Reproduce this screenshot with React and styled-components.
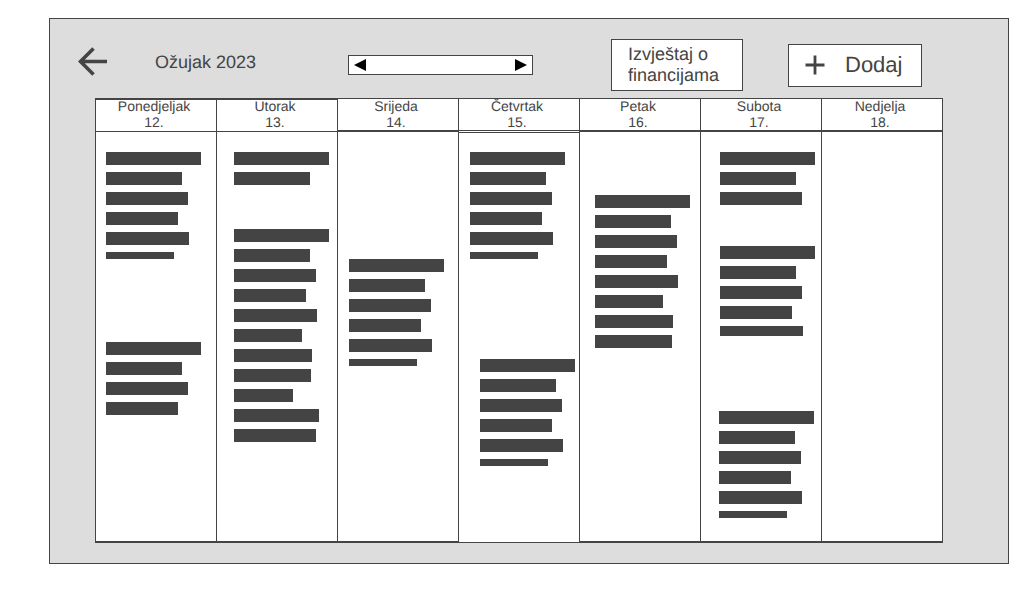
import React from 'react';
import styled, { createGlobalStyle, ThemeProvider } from 'styled-components';

const theme = { ink: '#444444', panel: '#dddddd', paper: '#ffffff' };

const GlobalStyle = createGlobalStyle`
  *, *::before, *::after { box-sizing: border-box; }
  body {
    margin: 0;
    background: #ffffff;
    color: #444444;
    font-family: "Liberation Sans", Arial, sans-serif;
    text-rendering: geometricPrecision;
  }
`;

const Frame = styled.main`
  margin: 18px 15px 0 49px;
  border: 1px solid ${({ theme }) => theme.ink};
  background: ${({ theme }) => theme.panel};
  padding-bottom: 20px;
`;

const Toolbar = styled.header`
  display: flex;
  align-items: center;
  justify-content: space-between;
  min-height: 79px;
  padding: 13px 86px 0 28px;
`;

const Navigation = styled.div`
  display: flex;
  align-items: center;
  padding-bottom: 6px;
`;

const Actions = styled.div`
  display: flex;
  align-items: center;
  gap: 45px;
`;

const BackButton = styled.button`
  display: flex;
  padding: 0;
  border: 0;
  background: none;
  color: inherit;
  margin-right: 47px;
`;

const Month = styled.h1`
  margin: 0;
  width: 193px;
  font-size: 18px;
  line-height: 20px;
  font-weight: 400;
`;

const Pager = styled.nav`
  display: flex;
  align-items: center;
  justify-content: space-between;
  width: 185px;
  height: 20px;
  padding: 0 5px;
  margin-top: 6px;
  border: 1px solid ${({ theme }) => theme.ink};
  background: ${({ theme }) => theme.paper};
`;

const PagerButton = styled.button`
  display: flex;
  padding: 0;
  border: 0;
  background: none;
  color: #000000;
`;

const ActionButton = styled.button`
  display: flex;
  align-items: center;
  border: 1px solid ${({ theme }) => theme.ink};
  background: ${({ theme }) => theme.paper};
  color: inherit;
  font-family: inherit;
  text-align: left;
  text-rendering: inherit;
`;

const ReportButton = styled(ActionButton)`
  width: 132px;
  height: 52px;
  padding: 0 16px;
  font-size: 18px;
  line-height: 21px;
`;

const AddButton = styled(ActionButton)`
  gap: 20px;
  width: 134px;
  height: 43px;
  padding: 0 16px;
  font-size: 22px;
  line-height: 24px;
`;

const Calendar = styled.div`
  padding: 0 65px 0 45px;
`;

const Week = styled.table`
  width: 100%;
  table-layout: fixed;
  border-collapse: separate;
  border-spacing: 0;
  border-left: 1px solid ${({ theme }) => theme.ink};
  background: ${({ theme }) => theme.paper};
`;

const HeadCell = styled.th`
  padding: 0;
  vertical-align: top;
  border-right: 1px solid ${({ theme }) => theme.ink};
  height: 34px;
  font-size: 14px;
  line-height: 16px;
  font-weight: 400;
`;

const HeadLabel = styled.div`
  height: ${({ $split }) => ($split ? 33 : 34)}px;
  padding-right: 4px;
  box-shadow:
    inset 0 ${({ $top }) => $top}px 0 ${({ theme }) => theme.ink},
    inset 0 -${({ $bottom }) => $bottom}px 0 ${({ theme }) => theme.ink};
`;

const DayCell = styled.td`
  height: 411px;
  padding: 0;
  vertical-align: top;
  border-right: 1px solid ${({ theme }) => theme.ink};
  box-shadow:
    inset 0 ${({ $split }) => ($split ? 1 : 0)}px 0 ${({ theme }) => theme.ink},
    inset 0 -${({ $split }) => ($split ? 1 : 2)}px 0 ${({ theme }) => theme.ink};
`;

const Entry = styled.div`
  display: flex;
  flex-direction: column;
  gap: 7px;
  padding-top: ${({ $before }) => $before}px;
  padding-left: ${({ $indent }) => $indent}px;
`;

const Line = styled.div`
  width: ${({ $width }) => $width}px;
  height: ${({ $height }) => $height}px;
  background: ${({ theme }) => theme.ink};
`;

const LINE_WIDTHS = [95, 76, 82, 72, 83, 68, 78, 77, 59, 85, 82];

const DAYS = [
  { name: 'Ponedjeljak', date: '12.', top: 2, bottom: 1, entries: [
    { before: 20, indent: 10, lines: 6, last: 7 },
    { before: 83, indent: 10, lines: 4 },
  ] },
  { name: 'Utorak', date: '13.', top: 2, bottom: 1, entries: [
    { before: 20, indent: 17, lines: 2 },
    { before: 44, indent: 17, lines: 11 },
  ] },
  { name: 'Srijeda', date: '14.', top: 1, bottom: 2, entries: [
    { before: 127, indent: 11, lines: 6, last: 7 },
  ] },
  { name: 'Četvrtak', date: '15.', top: 1, bottom: 1, split: true, entries: [
    { before: 20, indent: 11, lines: 6, last: 7 },
    { before: 100, indent: 21, lines: 6, last: 7 },
  ] },
  { name: 'Petak', date: '16.', top: 1, bottom: 2, entries: [
    { before: 63, indent: 15, lines: 8 },
  ] },
  { name: 'Subota', date: '17.', top: 1, bottom: 2, entries: [
    { before: 20, indent: 19, lines: 3 },
    { before: 41, indent: 19, lines: 5, last: 10 },
    { before: 75, indent: 18, lines: 6, last: 7 },
  ] },
  { name: 'Nedjelja', date: '18.', top: 1, bottom: 2, entries: [] },
];

function EntryLines({ entry }) {
  return (
    <Entry $before={entry.before} $indent={entry.indent}>
      {LINE_WIDTHS.slice(0, entry.lines).map((width, i) => (
        <Line key={i} $width={width} $height={i === entry.lines - 1 && entry.last ? entry.last : 13} />
      ))}
    </Entry>
  );
}

export default function App() {
  return (
    <ThemeProvider theme={theme}>
      <GlobalStyle />
      <Frame>
        <Toolbar>
          <Navigation>
            <BackButton type="button" aria-label="Natrag">
              <svg width="30" height="30" viewBox="0 0 30 30" fill="none" stroke="currentColor" strokeWidth="3.6">
                <path d="M29 14.5H3M15.5 1.5L2.5 14.5L15.5 27.5" />
              </svg>
            </BackButton>
            <Month>Ožujak 2023</Month>
            <Pager aria-label="Tjedan">
              <PagerButton type="button" aria-label="Prethodni">
                <svg width="12" height="12" viewBox="0 0 12 12"><path d="M12 0V12L0 6Z" fill="currentColor" /></svg>
              </PagerButton>
              <PagerButton type="button" aria-label="Sljedeći">
                <svg width="12" height="12" viewBox="0 0 12 12"><path d="M0 0V12L12 6Z" fill="currentColor" /></svg>
              </PagerButton>
            </Pager>
          </Navigation>
          <Actions>
            <ReportButton type="button">Izvještaj o financijama</ReportButton>
            <AddButton type="button">
              <svg width="20" height="20" viewBox="0 0 20 20" fill="none" stroke="currentColor" strokeWidth="2.8">
                <path d="M0.5 10H19.5M10 0.5V19.5" />
              </svg>
              Dodaj
            </AddButton>
          </Actions>
        </Toolbar>
        <Calendar>
          <Week>
            <thead>
              <tr>
                {DAYS.map((day) => (
                  <HeadCell key={day.name} scope="col">
                    <HeadLabel $top={day.top} $bottom={day.bottom} $split={day.split}>
                      {day.name}<br />{day.date}
                    </HeadLabel>
                  </HeadCell>
                ))}
              </tr>
            </thead>
            <tbody>
              <tr>
                {DAYS.map((day) => (
                  <DayCell key={day.name} $split={day.split}>
                    {day.entries.map((entry, i) => <EntryLines key={i} entry={entry} />)}
                  </DayCell>
                ))}
              </tr>
            </tbody>
          </Week>
        </Calendar>
      </Frame>
    </ThemeProvider>
  );
}
